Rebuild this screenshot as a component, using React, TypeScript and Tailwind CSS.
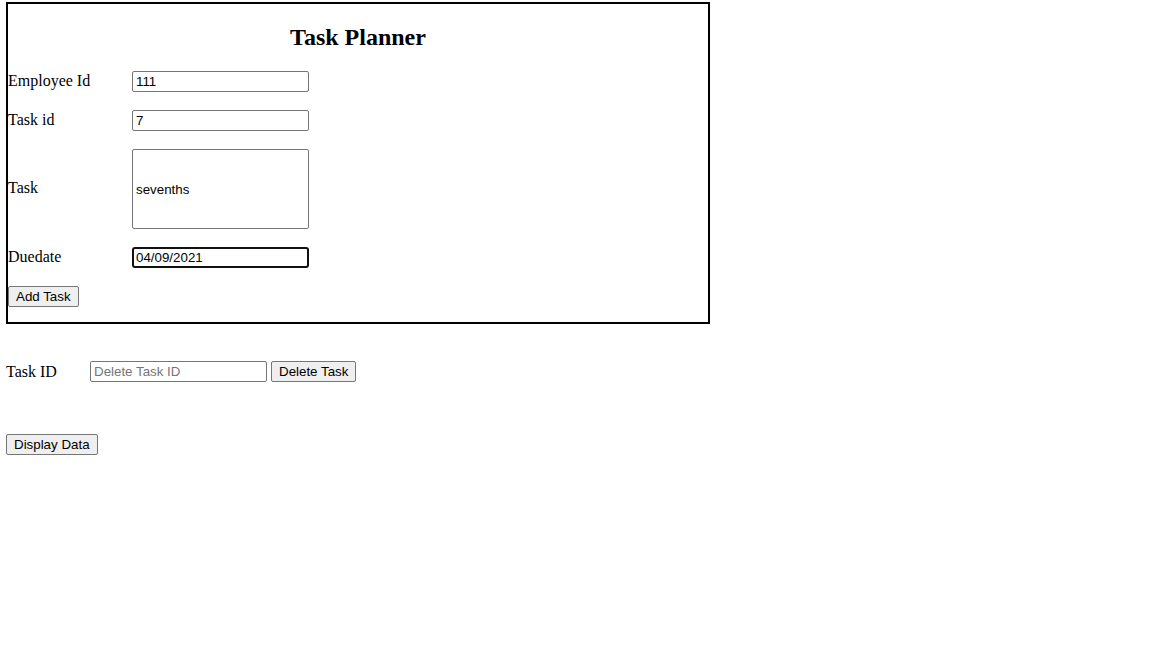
import React from "react";

const serif = "font-['Liberation_Serif',serif]";
const sans = "font-['Liberation_Sans',Arial,sans-serif]";

const inputCls = `w-[177px] h-[21px] border border-[#767676] rounded-[2px] pl-[3px] text-[13.33px] text-black ${sans} outline-none bg-white`;
const btnCls = `h-[21px] border border-[#767676] rounded-[2px] bg-[#efefef] px-[7px] text-[13.33px] text-black leading-none ${sans}`;

function Row({ label, children }: { label: string; children: React.ReactNode }) {
  return (
    <div className="flex items-center">
      <span className={`w-[124px] text-[16px] leading-[18px] -mt-[2px] ${serif}`}>{label}</span>
      {children}
    </div>
  );
}

export default function App() {
  return (
    <div className={`bg-white w-[1152px] h-[648px] text-black ${serif}`}>
      <div className="pt-[2px] pl-[6px]">
        <div className="w-[704px] h-[322px] border-2 border-black">
          <h2 className="mt-[19px] mb-[20px] h-[28px] leading-[28px] text-center text-[24px] font-bold">
            Task Planner
          </h2>
          <div className="flex flex-col gap-[18px]">
            <Row label="Employee Id">
              <input className={inputCls} defaultValue="111" />
            </Row>
            <Row label="Task id">
              <input className={inputCls} defaultValue="7" />
            </Row>
            <Row label="Task">
              <input className={`${inputCls} h-[80px]`} defaultValue="sevenths" />
            </Row>
            <Row label="Duedate">
              <input
                className={`w-[177px] h-[21px] border-2 border-[#101010] rounded-[3px] pl-[2px] text-[13.33px] text-black ${sans} outline-none`}
                defaultValue="04/09/2021"
              />
            </Row>
            <div className="flex">
              <button className={btnCls}>Add Task</button>
            </div>
          </div>
        </div>
      </div>

      <div className="pl-[6px] mt-[37px] flex items-center">
        <span className="w-[84px] text-[16px] leading-[18px]">Task ID</span>
        <input className={`${inputCls} placeholder:text-[#757575]`} placeholder="Delete Task ID" />
        <button className={`${btnCls} ml-[4px]`}>Delete Task</button>
      </div>

      <div className="pl-[6px] mt-[52px] flex">
        <button className={btnCls}>Display Data</button>
      </div>
    </div>
  );
}
